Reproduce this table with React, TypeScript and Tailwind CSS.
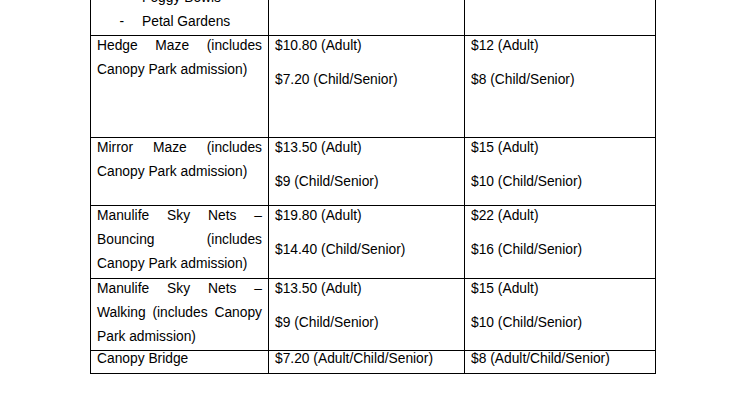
type Line = { text: string; justify?: boolean };

type Row = {
  height: string;
  name: Line[];
  member: string[];
  standard: string[];
};

const rows: Row[] = [
  {
    height: "h-[101px]",
    name: [
      { text: "Hedge Maze (includes", justify: true },
      { text: "Canopy Park admission)" }
    ],
    member: ["$10.80 (Adult)", "$7.20 (Child/Senior)"],
    standard: ["$12 (Adult)", "$8 (Child/Senior)"]
  },
  {
    height: "h-[67px]",
    name: [
      { text: "Mirror Maze (includes", justify: true },
      { text: "Canopy Park admission)" }
    ],
    member: ["$13.50 (Adult)", "$9 (Child/Senior)"],
    standard: ["$15 (Adult)", "$10 (Child/Senior)"]
  },
  {
    height: "h-[72px]",
    name: [
      { text: "Manulife Sky Nets –", justify: true },
      { text: "Bouncing (includes", justify: true },
      { text: "Canopy Park admission)" }
    ],
    member: ["$19.80 (Adult)", "$14.40 (Child/Senior)"],
    standard: ["$22 (Adult)", "$16 (Child/Senior)"]
  },
  {
    height: "h-[71px]",
    name: [
      { text: "Manulife Sky Nets –", justify: true },
      { text: "Walking (includes Canopy", justify: true },
      { text: "Park admission)" }
    ],
    member: ["$13.50 (Adult)", "$9 (Child/Senior)"],
    standard: ["$15 (Adult)", "$10 (Child/Senior)"]
  }
];

function NameCell({ lines }: { lines: Line[] }) {
  return (
    <div className="border-r border-black px-[6px]">
      {lines.map((line) => (
        <div
          key={line.text}
          className={`h-6 leading-[19px] ${line.justify ? "text-justify [text-align-last:justify]" : ""}`}
        >
          {line.text}
        </div>
      ))}
    </div>
  );
}

function PriceCell({ prices }: { prices: string[] }) {
  return (
    <div className="border-r border-black pl-[6px]">
      <div className="h-[34px] leading-[19px]">{prices[0]}</div>
      <div className="h-6 leading-[19px]">{prices[1]}</div>
    </div>
  );
}

function BulletLine({ text }: { text: string }) {
  return (
    <div className="flex h-6 leading-[19px]">
      <span className="w-[33px] text-right">-</span>
      <span className="pl-[18px]">{text}</span>
    </div>
  );
}

export default function App() {
  return (
    <div className="h-[419px] w-[746px] overflow-hidden bg-white text-[13.8px] text-black [font-family:'Liberation_Sans',Arial,sans-serif]">
      <div className="ml-[90px] mt-[-12px] w-[566px] border-l border-black">
        <div className="grid h-12 grid-cols-[178px_196px_191px] border-b border-black">
          <div className="border-r border-black">
            <BulletLine text="Foggy Bowls" />
            <BulletLine text="Petal Gardens" />
          </div>
          <div className="border-r border-black" />
          <div className="border-r border-black" />
        </div>

        {rows.map((row, i) => (
          <div
            key={i}
            className={`grid ${row.height} box-content grid-cols-[178px_196px_191px] border-b border-black`}
          >
            <NameCell lines={row.name} />
            <PriceCell prices={row.member} />
            <PriceCell prices={row.standard} />
          </div>
        ))}

        <div className="box-content grid h-[22px] grid-cols-[178px_196px_191px] border-b border-black leading-[16px]">
          <div className="border-r border-black pl-[6px]">Canopy Bridge</div>
          <div className="border-r border-black pl-[6px]">$7.20 (Adult/Child/Senior)</div>
          <div className="border-r border-black pl-[6px]">$8 (Adult/Child/Senior)</div>
        </div>
      </div>
    </div>
  );
}
